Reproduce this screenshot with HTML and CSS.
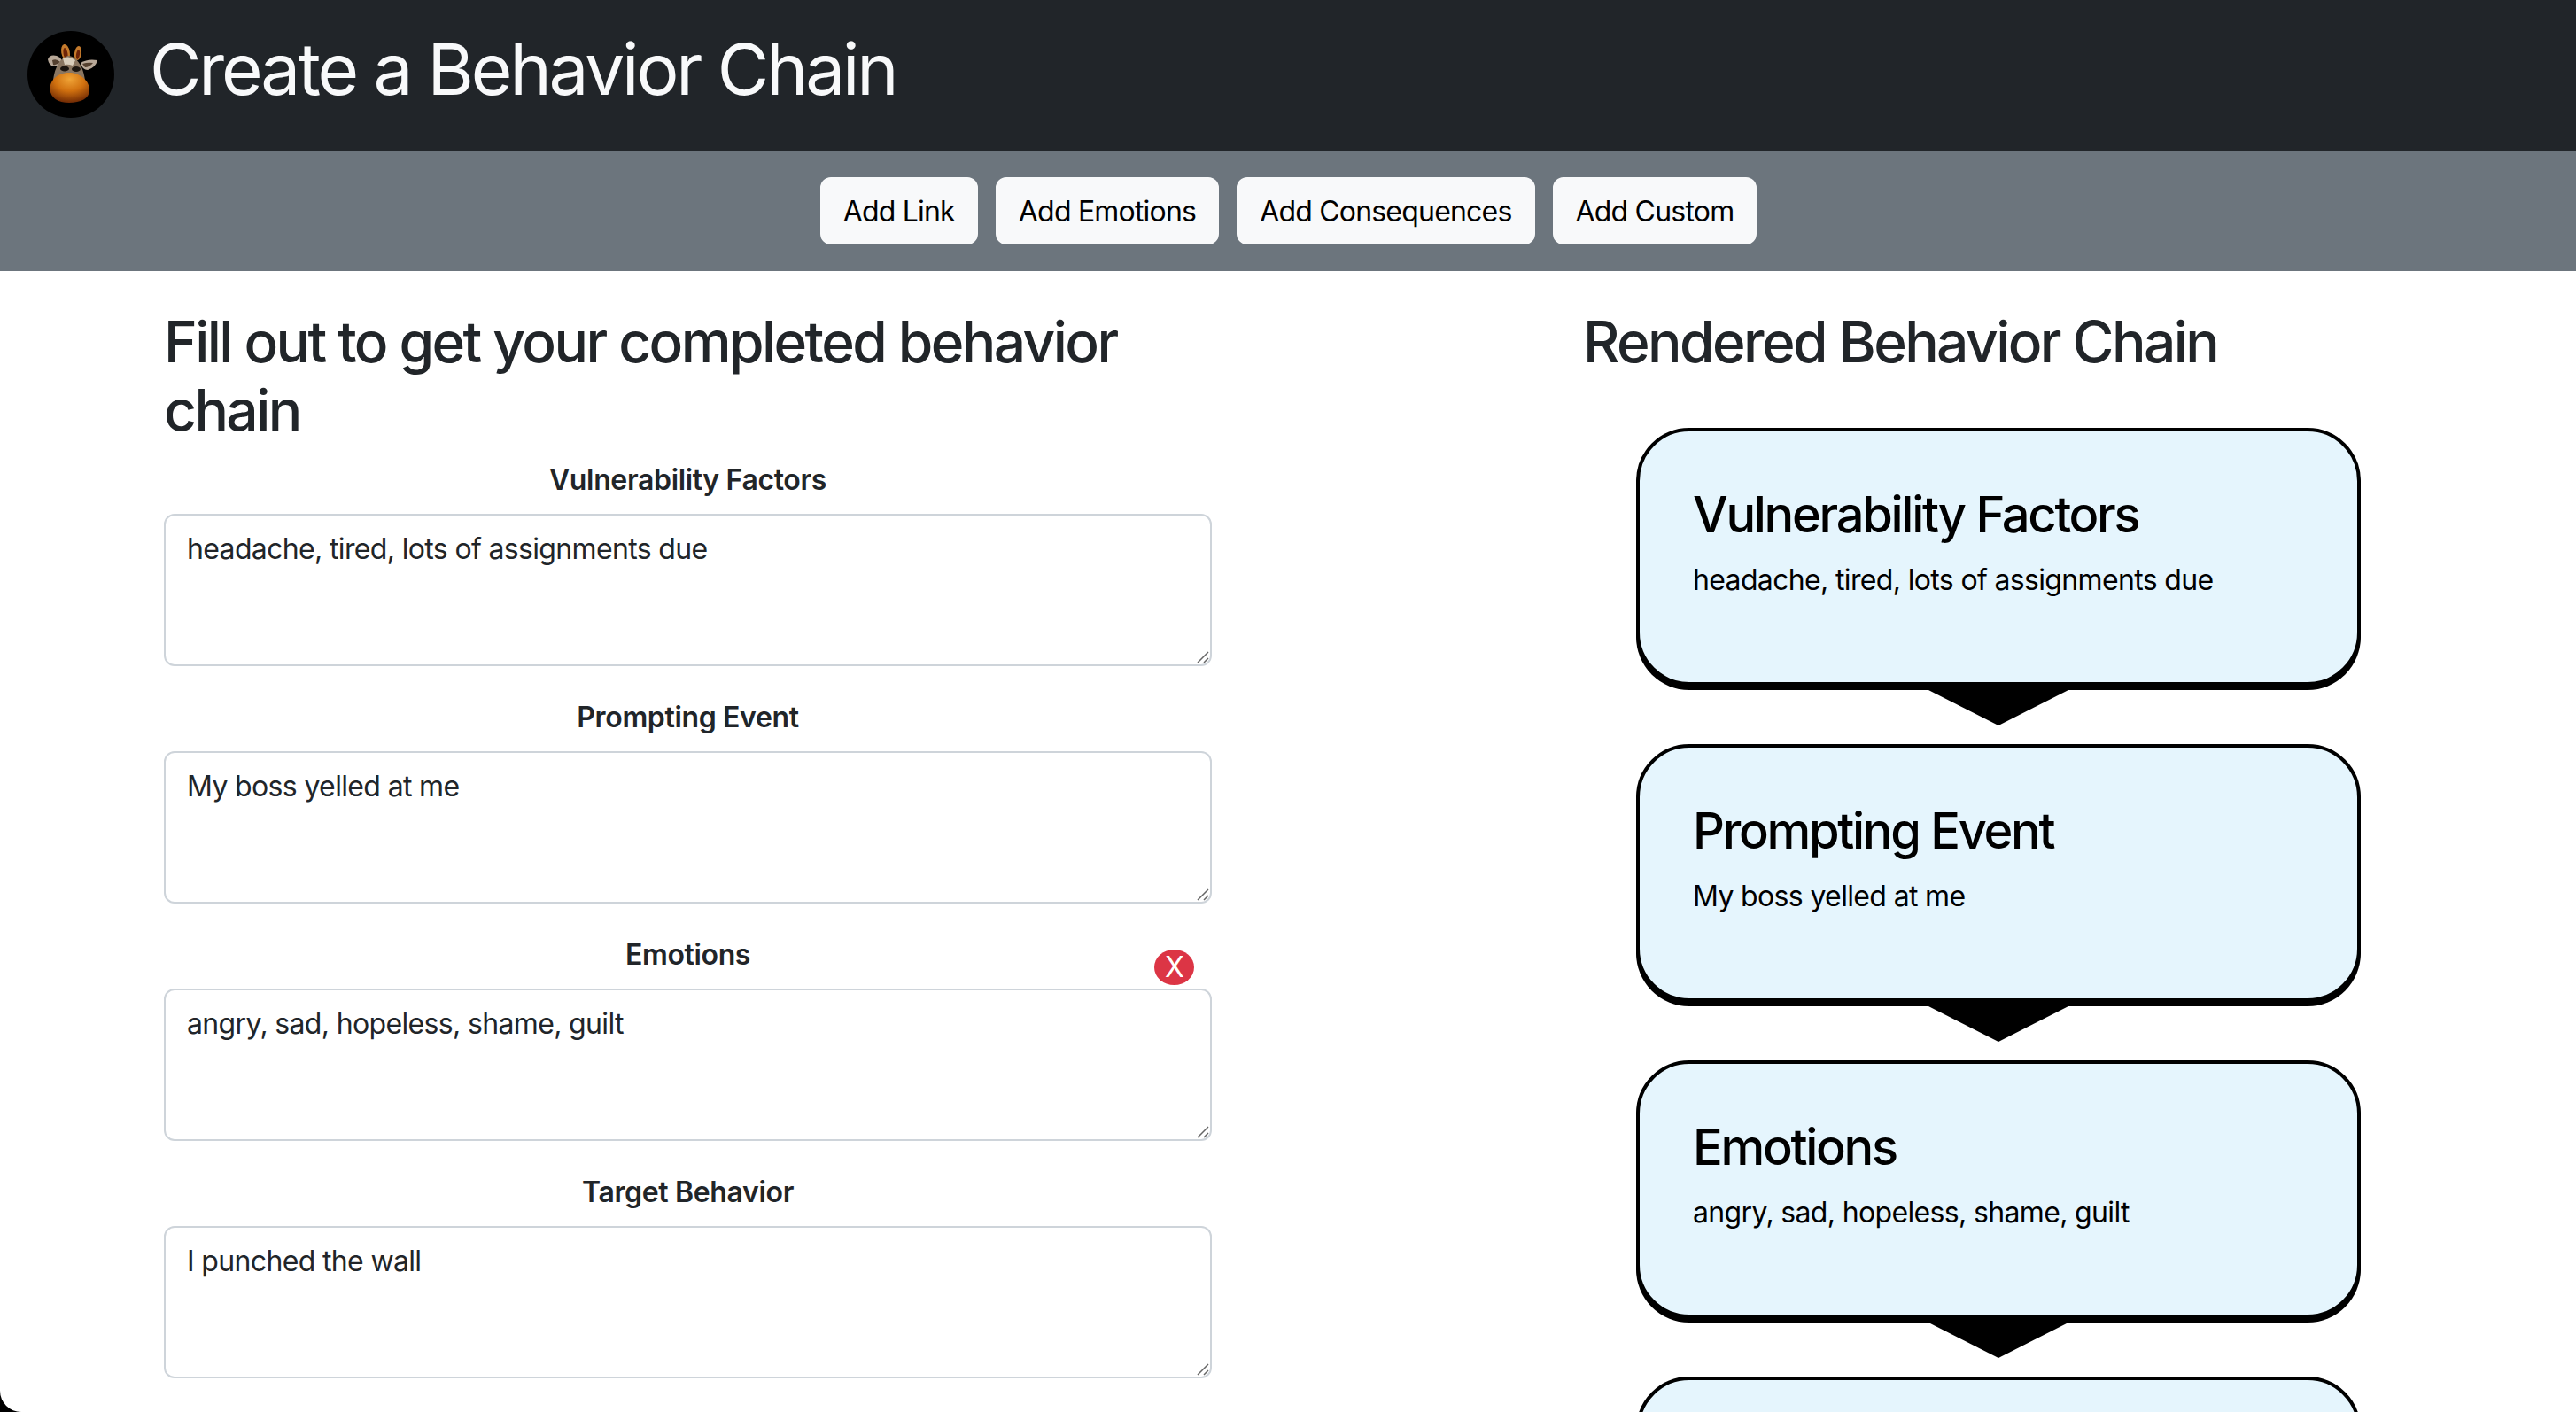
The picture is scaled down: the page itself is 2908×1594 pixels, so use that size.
FILE: index.html
```html
<!DOCTYPE html>
<html lang="en">
<head>
    <meta charset="UTF-8">
    <title>Create a Behavior Chain</title>
    <link rel="stylesheet" href="styles.css">
</head>
<body>
<div class="page">

    <header class="topbar">
        <svg class="logo" viewBox="0 0 98 98" aria-hidden="true">
            <defs>
                <radialGradient id="muzzle" cx="50%" cy="22%" r="78%">
                    <stop offset="0" stop-color="#f0a437"/>
                    <stop offset=".5" stop-color="#d0700f"/>
                    <stop offset="1" stop-color="#702a04"/>
                </radialGradient>
            </defs>
            <circle cx="49" cy="49" r="49" fill="#000"/>
            <ellipse cx="43" cy="24" rx="4.8" ry="9.2" fill="#c47a2c" transform="rotate(-10 43 24)"/>
            <ellipse cx="43" cy="25.5" rx="2.4" ry="6.5" fill="#6e2408" transform="rotate(-10 43 25.5)"/>
            <ellipse cx="57" cy="25" rx="4" ry="8" fill="#c47a2c" transform="rotate(8 57 25)"/>
            <ellipse cx="57" cy="26.5" rx="2" ry="5.5" fill="#6e2408" transform="rotate(8 57 26.5)"/>
            <path d="M23 32 Q25 26 33 28 Q38 30 39 34 Q35 40 29 40 Q24 38 23 32 Z" fill="#b8a898"/>
            <path d="M28 33 Q33 31 37 35 Q33 39 29 38 Z" fill="#54402f"/>
            <path d="M60 36 Q68 31 79 33 Q77 41 68 44 Q62 44 60 36 Z" fill="#b8a898"/>
            <path d="M62 37 Q68 35 74 36 Q70 41 65 41 Z" fill="#54402f"/>
            <path d="M29 56 C30 44 36 30 46 28 C56 29 63 40 65 56 Z" fill="#8a7661"/>
            <path d="M40 31 Q47 27 54 33 L51 39 Q46 37 42 38 Z" fill="#d8cdbb"/>
            <ellipse cx="42" cy="42.5" rx="5" ry="3" fill="#1d1610"/>
            <ellipse cx="55" cy="43" rx="5" ry="3" fill="#1d1610"/>
            <path d="M25.5 66 C25 54 36 47 47 47 C58 47 70 55 70 67 C70 76 60 81 47 81 C34 81 26 75 25.5 66 Z" fill="url(#muzzle)"/>
        </svg>
        <h1 class="page-title">Create a Behavior Chain</h1>
    </header>

    <nav class="toolbar">
        <button class="tool-btn">Add Link</button>
        <button class="tool-btn">Add Emotions</button>
        <button class="tool-btn">Add Consequences</button>
        <button class="tool-btn">Add Custom</button>
    </nav>

    <main class="columns">
        <section class="form-col">
            <h2 class="col-title">Fill out to get your completed behavior chain</h2>

            <div class="field">
                <label class="field-label" for="f1">Vulnerability Factors</label>
                <textarea class="field-input" id="f1">headache, tired, lots of assignments due</textarea>
                <svg class="grip" viewBox="0 0 14 14" aria-hidden="true"><path d="M1 13 L13 1 M8 13 L13 8"/></svg>
            </div>
            <div class="field">
                <label class="field-label" for="f2">Prompting Event</label>
                <textarea class="field-input" id="f2">My boss yelled at me</textarea>
                <svg class="grip" viewBox="0 0 14 14" aria-hidden="true"><path d="M1 13 L13 1 M8 13 L13 8"/></svg>
            </div>
            <div class="field">
                <label class="field-label" for="f3">Emotions</label>
                <span class="remove-btn">X</span>
                <textarea class="field-input" id="f3">angry, sad, hopeless, shame, guilt</textarea>
                <svg class="grip" viewBox="0 0 14 14" aria-hidden="true"><path d="M1 13 L13 1 M8 13 L13 8"/></svg>
            </div>
            <div class="field">
                <label class="field-label" for="f4">Target Behavior</label>
                <textarea class="field-input" id="f4">I punched the wall</textarea>
                <svg class="grip" viewBox="0 0 14 14" aria-hidden="true"><path d="M1 13 L13 1 M8 13 L13 8"/></svg>
            </div>
        </section>

        <section class="chain-col">
            <h2 class="col-title">Rendered Behavior Chain</h2>

            <div class="chain">
                <div class="link">
                    <h3 class="link-title">Vulnerability Factors</h3>
                    <p class="link-text">headache, tired, lots of assignments due</p>
                </div>
                <div class="link">
                    <h3 class="link-title">Prompting Event</h3>
                    <p class="link-text">My boss yelled at me</p>
                </div>
                <div class="link">
                    <h3 class="link-title">Emotions</h3>
                    <p class="link-text">angry, sad, hopeless, shame, guilt</p>
                </div>
                <div class="link"></div>
            </div>
        </section>
    </main>

</div>
</body>
</html>
```

FILE: styles.css
```css
* {
    box-sizing: border-box;
}

body {
    margin: 0;
    background-color: #000;
    font-family: "Inter", "Liberation Sans", sans-serif;
    font-size: 32px;
    line-height: 48px;
    letter-spacing: -.65px;
    color: #212529;
}

.page {
    height: 100vh;
    overflow: hidden;
    background-color: #fff;
    border-bottom-left-radius: 24px;
}

.topbar {
    display: flex;
    align-items: flex-start;
    height: 170px;
    padding: 35px 0 0 31px;
    background-color: #212529;
}

.logo {
    width: 98px;
    height: 98px;
    flex: none;
}

.page-title {
    margin: -5px 0 0 40px;
    font-size: 80px;
    font-weight: 400;
    line-height: 96px;
    letter-spacing: -3.1px;
    color: #f8f9fa;
}

.toolbar {
    display: flex;
    justify-content: center;
    gap: 20px;
    padding: 30px 0 30px 1px;
    background-color: #6c757d;
}

.tool-btn {
    height: 76px;
    padding: 0 24px;
    border: 2px solid #f8f9fa;
    border-radius: 12px;
    background-color: #f8f9fa;
    font-family: inherit;
    font-size: 32px;
    letter-spacing: -.8px;
    color: #000;
}

.columns {
    display: grid;
    grid-template-columns: 1183px 818px;
    column-gap: 479px;
    padding: 41px 0 0 185px;
}

.form-col {
    min-width: 0;
}

.chain-col {
    margin-left: -60px;
}

.col-title {
    margin: 0 0 17px;
    font-size: 64px;
    font-weight: 500;
    line-height: 77px;
    letter-spacing: -2.55px;
}

.field {
    position: relative;
    margin-bottom: 34px;
}

.field-label {
    display: block;
    margin-bottom: 14px;
    font-weight: 600;
    letter-spacing: -.35px;
    text-align: center;
}

.field-input {
    display: block;
    width: 100%;
    height: 172px;
    padding: 14px 24px 10px;
    border: 2px solid #ced4da;
    border-radius: 12px;
    font-family: inherit;
    font-size: 32px;
    line-height: 48px;
    letter-spacing: inherit;
    color: #212529;
    outline: none;
    resize: none;
}

.grip {
    position: absolute;
    right: 3px;
    bottom: 3px;
    width: 14px;
    height: 14px;
    fill: none;
    stroke: #666;
    stroke-width: 1.5;
}

.remove-btn {
    position: absolute;
    top: 18px;
    right: 20px;
    width: 45px;
    height: 40px;
    border-radius: 50%;
    background-color: #dc3545;
    font-size: 32px;
    line-height: 40px;
    text-align: center;
    color: #fff;
}

.chain {
    margin: 59px 0 0 60px;
}

.link {
    position: relative;
    height: 291px;
    margin-bottom: 66px;
    padding: 61px 60px 0;
    border: 4px solid #000;
    border-radius: 60px;
    background-color: #e5f5fd;
    box-shadow: 0 5px 0 #000;
    color: #000;
}

.link::after {
    content: "";
    position: absolute;
    left: 50%;
    bottom: -49px;
    width: 158px;
    height: 40px;
    margin-left: -79px;
    background-color: #000;
    clip-path: polygon(0 0, 100% 0, 50% 100%);
}

.link-title {
    margin: 0 0 16px;
    font-size: 56px;
    font-weight: 500;
    line-height: 67px;
    letter-spacing: -2.3px;
}

.link-text {
    margin: 0;
}
```
